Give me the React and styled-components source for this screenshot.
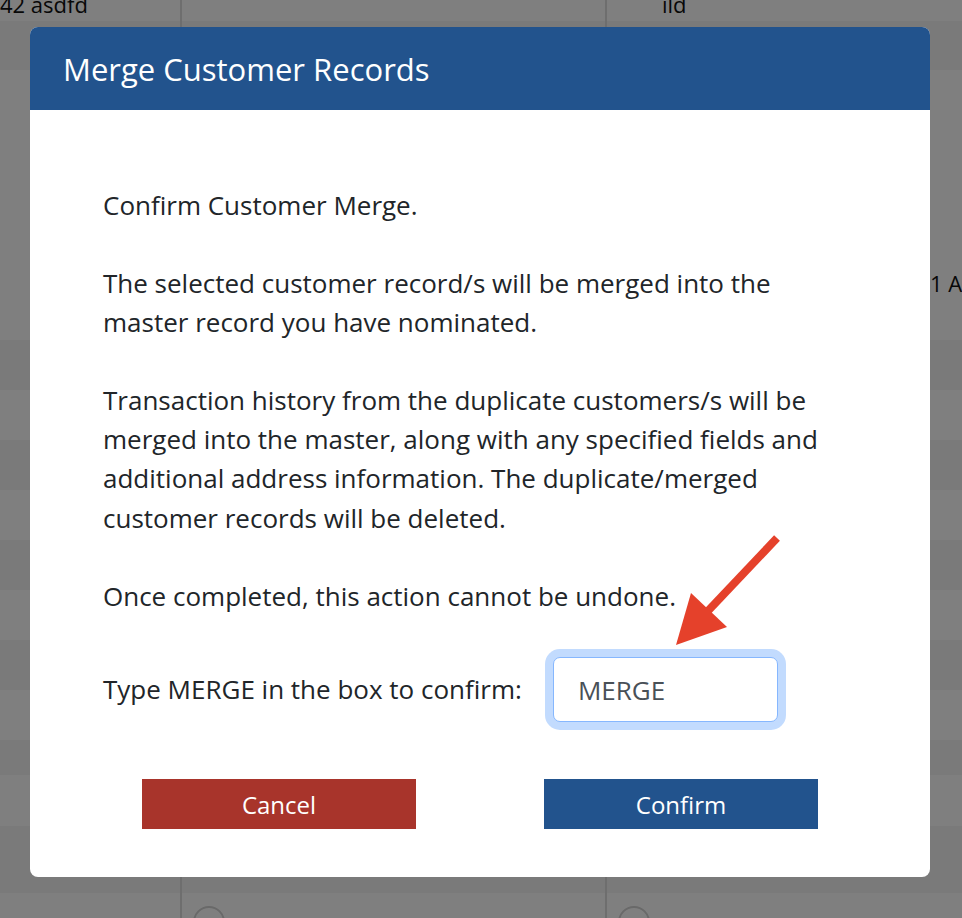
import React from "react";
import styled, { createGlobalStyle } from "styled-components";

const GlobalStyle = createGlobalStyle`
  html, body {
    margin: 0;
    padding: 0;
    overflow: hidden;
    font-family: "Open Sans", "Liberation Sans", sans-serif;
  }
`;

const Page = styled.div`
  position: relative;
  width: 962px;
  height: 918px;
  overflow: hidden;
  background: #ffffff;
`;

/* the customer table that sits behind the dialog */
const Table = styled.div`
  display: flex;
  flex-direction: column;
`;

const Row = styled.div`
  display: grid;
  grid-template-columns: 180px 425px 303px 1fr;
  grid-template-rows: ${(p) => p.$h}px;
  height: ${(p) => p.$h}px;
  background: ${(p) => (p.$dark ? "#f4f4f4" : "#ffffff")};
  overflow: hidden;
`;

const Cell = styled.div`
  display: flex;
  align-items: ${(p) => (p.$bottom ? "flex-end" : "center")};
  gap: 12px;
  min-height: 0;
  box-sizing: border-box;
  padding-bottom: ${(p) => (p.$bottom ? 6 : 0)}px;
  padding-left: ${(p) => p.$indent || 0}px;
  border-left: ${(p) => (p.$line ? "2px solid #dcdcdc" : "none")};
  font-size: 22px;
  line-height: 22px;
  color: #111;
  white-space: nowrap;
`;

const Radio = styled.span`
  flex: none;
  width: 28px;
  height: 28px;
  border-radius: 50%;
  border: 2px solid #d2d2d2;
  background: #fff;
  margin-top: 18px;
`;

const RadioLabel = styled.span`
  margin-top: 30px;
`;

const Overlay = styled.div`
  position: absolute;
  inset: 0;
  background: rgba(0, 0, 0, 0.5);
`;

const Modal = styled.div`
  position: absolute;
  left: 30px;
  top: 27px;
  width: 900px;
  background: #fff;
  border-radius: 8px;
  overflow: hidden;
`;

const Header = styled.div`
  height: 83px;
  display: flex;
  align-items: center;
  padding-left: 33px;
  background: #22538d;
  color: #fff;
  font-size: 31px;
`;

const Body = styled.div`
  padding: 76px 73px 48px;
  color: #212529;
  font-size: 26px;
  line-height: 39.3px;
`;

const Para = styled.p`
  margin: 0 0 38.5px;
`;

const ConfirmRow = styled.div`
  display: flex;
  align-items: center;
  gap: 31px;
  margin-top: 41.5px;
`;

const MergeInput = styled.input`
  box-sizing: border-box;
  width: 225px;
  height: 65px;
  padding: 0 24px;
  border: 1.5px solid #86b7fe;
  border-radius: 7px;
  box-shadow: 0 0 0 8px rgba(13, 110, 253, 0.25);
  outline: none;
  font-family: inherit;
  font-size: 26px;
  color: #495057;
`;

const Actions = styled.div`
  display: flex;
  justify-content: center;
  gap: 128px;
  margin: 57px -73px 0;
`;

const Button = styled.button`
  width: 274px;
  height: 50px;
  border: none;
  border-radius: 0;
  background: ${(p) => (p.$danger ? "#a8342b" : "#22538d")};
  color: #fff;
  font-family: inherit;
  font-size: 24px;
  cursor: pointer;
`;

const Arrow = styled.svg`
  position: absolute;
  left: 660px;
  top: 530px;
`;

const rows = [
  { h: 21, dark: false, bottom: true, cells: ["42 asdfd", "", "ild"] },
  { h: 49, dark: true },
  { h: 190, dark: false },
  { h: 46, dark: false, cells: ["", "", "", "1 A"] },
  { h: 34, dark: false },
  { h: 50, dark: true },
  { h: 50, dark: false },
  { h: 50, dark: true },
  { h: 50, dark: false },
  { h: 50, dark: true },
  { h: 50, dark: false },
  { h: 50, dark: true },
  { h: 50, dark: false },
  { h: 35, dark: true },
  { h: 51, dark: false },
  { h: 67, dark: true },
  { h: 40, dark: false, radios: true },
];

const indents = [0, 11, 55, 22];

export default function App() {
  return (
    <Page>
      <GlobalStyle />
      <Table>
        {rows.map((r, i) => (
          <Row key={i} $h={r.h} $dark={r.dark}>
            {[0, 1, 2, 3].map((c) => (
              <Cell
                key={c}
                $line={c === 1 || c === 2}
                $bottom={r.bottom}
                $indent={r.radios ? 11 : indents[c]}
              >
                {r.radios && (c === 1 || c === 2) && <Radio />}
                {r.radios && c === 2 && <RadioLabel>M</RadioLabel>}
                {r.cells && r.cells[c]}
              </Cell>
            ))}
          </Row>
        ))}
      </Table>
      <Overlay />
      <Modal>
        <Header>Merge Customer Records</Header>
        <Body>
          <Para>Confirm Customer Merge.</Para>
          <Para>
            The selected customer record/s will be merged into the
            <br />
            master record you have nominated.
          </Para>
          <Para>
            Transaction history from the duplicate customers/s will be
            <br />
            merged into the master, along with any specified fields and
            <br />
            additional address information. The duplicate/merged
            <br />
            customer records will be deleted.
          </Para>
          <Para>Once completed, this action cannot be undone.</Para>
          <ConfirmRow>
            <span>Type MERGE in the box to confirm:</span>
            <MergeInput defaultValue="MERGE" />
          </ConfirmRow>
          <Actions>
            <Button $danger>Cancel</Button>
            <Button>Confirm</Button>
          </Actions>
        </Body>
      </Modal>
      <Arrow width="130" height="125" viewBox="0 0 130 125">
        <line x1="117" y1="8" x2="46" y2="83" stroke="#e5412b" strokeWidth="8" />
        <polygon points="16,115 31,63 67,97" fill="#e5412b" />
      </Arrow>
    </Page>
  );
}
